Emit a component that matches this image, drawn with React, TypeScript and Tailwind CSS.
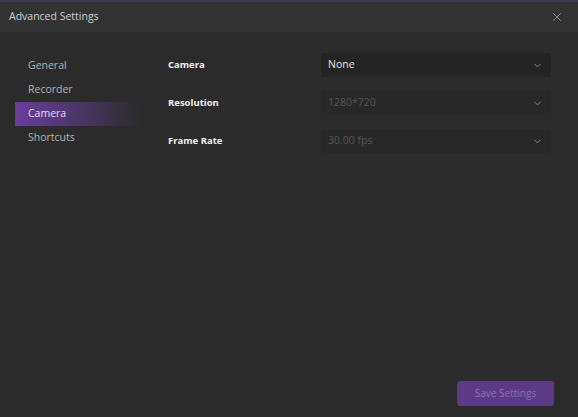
import { ChevronDown, X } from 'lucide-react';

const navItems = ['General', 'Recorder', 'Camera', 'Shortcuts'];

const fields = [
  { label: 'Camera', value: 'None', disabled: false },
  { label: 'Resolution', value: '1280*720', disabled: true },
  { label: 'Frame Rate', value: '30.00 fps', disabled: true },
];

export default function App() {
  return (
    <div
      className="w-[578px] h-[417px] bg-[#2b2b2b] flex flex-col overflow-hidden select-none"
      style={{ fontFamily: '"Open Sans", "Noto Sans", sans-serif' }}
    >
      <div className="h-[2px] bg-[#3b3a4e] shrink-0" />

      {/* title bar */}
      <header className="h-[30px] bg-[#333333] flex items-center justify-between pl-[9px] pr-[14px] shrink-0">
        <span className="text-[10.5px] text-[#cfcfcf]">Advanced Settings</span>
        <X className="w-[14px] h-[14px] text-[#9a9a9a]" strokeWidth={1.5} />
      </header>

      <div className="flex-1 flex">
        {/* side nav */}
        <nav className="w-[153px] pt-[22px] pl-[15px] flex flex-col shrink-0">
          {navItems.map((item) => (
            <div
              key={item}
              className={`w-[125px] h-[24px] pl-[13px] flex items-center text-[10.5px] ${
                item === 'Camera'
                  ? 'bg-gradient-to-r from-[#6a3d9c] via-[#553978]/80 to-transparent text-[#e6ddf1]'
                  : 'text-[#b5b5b5]'
              }`}
            >
              {item}
            </div>
          ))}
        </nav>

        {/* settings */}
        <main className="flex-1 flex flex-col">
          <div className="flex flex-col gap-[14px] pt-[21px] pl-[15px] pr-[27px]">
            {fields.map((f) => (
              <div key={f.label} className="flex items-center">
                <span className="w-[153px] text-[9.5px] font-bold text-[#f2f2f2]">{f.label}</span>
                <div
                  className={`flex-1 h-[24px] rounded-[2px] flex items-center justify-between pl-[7px] pr-[8px] ${
                    f.disabled ? 'bg-[#282828] text-[#555555]' : 'bg-[#242424] text-[#e4e4e4]'
                  }`}
                >
                  <span className="text-[10.5px]">{f.value}</span>
                  <ChevronDown className="w-[11px] h-[11px] text-[#8a8a8a]" strokeWidth={2} />
                </div>
              </div>
            ))}
          </div>

          <div className="mt-auto flex justify-end pr-[24px] pb-[11px]">
            <button className="w-[97px] h-[25px] rounded-[3px] bg-[#5c3a86] text-[10px] text-[#8a72a8]">
              Save Settings
            </button>
          </div>
        </main>
      </div>
    </div>
  );
}
